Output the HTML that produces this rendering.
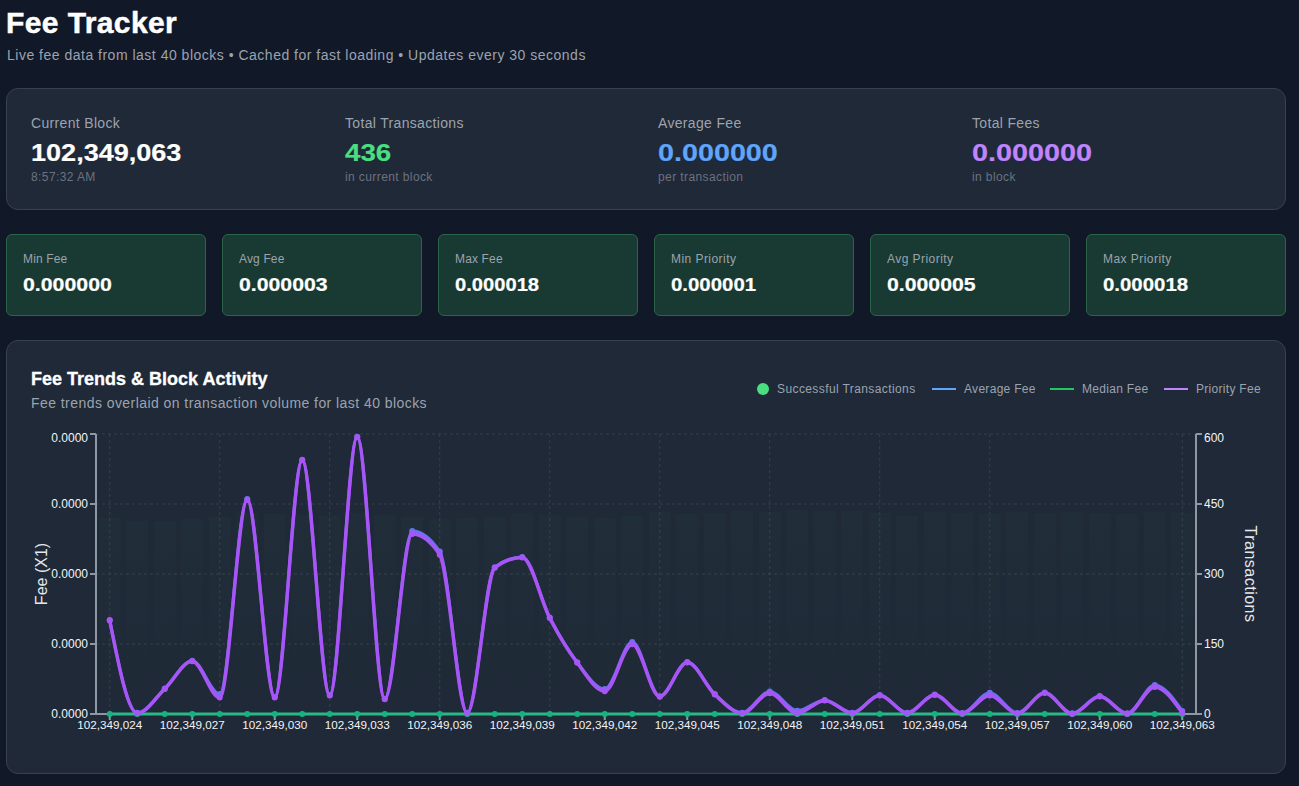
<!DOCTYPE html>
<html><head><meta charset="utf-8">
<style>
*{box-sizing:border-box;margin:0;padding:0}
html,body{width:1299px;height:786px;overflow:hidden;background:#111827;font-family:"Liberation Sans",sans-serif;color:#fff}
.abs{position:absolute;white-space:nowrap}
h1{position:absolute;left:6px;top:3px;font-size:30px;font-weight:700;color:#fff;line-height:40px;letter-spacing:0.4px;-webkit-text-stroke:0.5px #fff}
.sub{left:7px;top:45px;font-size:14px;color:#9ca3af;line-height:20px;letter-spacing:0.5px}
.card{position:absolute;background:#1f2937;border:1px solid #374151;border-radius:12px}
.g{position:absolute;top:234px;width:200px;height:82px;background:#183a32;border:1px solid #2b6549;border-radius:6px}
.lbl{font-size:14px;color:#9ca3af;line-height:20px;letter-spacing:0.33px}
.big{font-size:24px;font-weight:700;line-height:32px;-webkit-text-stroke:0.2px currentColor;transform-origin:0 0}
.sm{font-size:12px;color:#6b7280;line-height:16px;letter-spacing:0.4px}
.gl{font-size:12px;color:#9ca3af;line-height:16px;letter-spacing:0.15px}
.leg{font-size:12px;line-height:16px;color:#9ca3af;letter-spacing:0.3px}
.gv{font-size:18px;font-weight:700;line-height:28px;color:#fff;-webkit-text-stroke:0.2px #fff;transform-origin:0 0}
</style></head><body>
<h1>Fee Tracker</h1>
<div class="abs sub">Live fee data from last 40 blocks • Cached for fast loading • Updates every 30 seconds</div>

<div class="card" style="left:6px;top:88px;width:1280px;height:122px"></div>
<div class="abs lbl" style="left:31px;top:113px">Current Block</div>
<div class="abs big" style="left:31px;top:137px;transform:scaleX(1.127)">102,349,063</div>
<div class="abs sm" style="left:31px;top:169px">8:57:32 AM</div>

<div class="abs lbl" style="left:345px;top:113px">Total Transactions</div>
<div class="abs big" style="left:345px;top:137px;color:#4ade80;transform:scaleX(1.155)">436</div>
<div class="abs sm" style="left:345px;top:169px">in current block</div>

<div class="abs lbl" style="left:658px;top:113px">Average Fee</div>
<div class="abs big" style="left:658px;top:137px;color:#60a5fa;transform:scaleX(1.197)">0.000000</div>
<div class="abs sm" style="left:658px;top:169px">per transaction</div>

<div class="abs lbl" style="left:972px;top:113px">Total Fees</div>
<div class="abs big" style="left:972px;top:137px;color:#c084fc;transform:scaleX(1.2)">0.000000</div>
<div class="abs sm" style="left:972px;top:169px">in block</div>

<div class="g" style="left:6px"></div>
<div class="g" style="left:222px"></div>
<div class="g" style="left:438px"></div>
<div class="g" style="left:654px"></div>
<div class="g" style="left:870px"></div>
<div class="g" style="left:1086px"></div>
<div class="abs gl" style="left:23px;top:251px">Min Fee</div>
<div class="abs gv" style="left:23px;top:271px;transform:scaleX(1.183)">0.000000</div>
<div class="abs gl" style="left:239px;top:251px">Avg Fee</div>
<div class="abs gv" style="left:239px;top:271px;transform:scaleX(1.18)">0.000003</div>
<div class="abs gl" style="left:455px;top:251px">Max Fee</div>
<div class="abs gv" style="left:455px;top:271px;transform:scaleX(1.12)">0.000018</div>
<div class="abs gl" style="left:671px;top:251px;letter-spacing:0.45px">Min Priority</div>
<div class="abs gv" style="left:671px;top:271px;transform:scaleX(1.133)">0.000001</div>
<div class="abs gl" style="left:887px;top:251px;letter-spacing:0.45px">Avg Priority</div>
<div class="abs gv" style="left:887px;top:271px;transform:scaleX(1.18)">0.000005</div>
<div class="abs gl" style="left:1103px;top:251px;letter-spacing:0.45px">Max Priority</div>
<div class="abs gv" style="left:1103px;top:271px;transform:scaleX(1.133)">0.000018</div>

<div class="card" style="left:6px;top:340px;width:1280px;height:434px"></div>
<div class="abs" style="left:31px;top:365px;font-size:18px;font-weight:700;line-height:28px;color:#fff;letter-spacing:0px;-webkit-text-stroke:0.3px #fff">Fee Trends &amp; Block Activity</div>
<div class="abs" style="left:31px;top:393px;font-size:14px;line-height:20px;color:#9ca3af;letter-spacing:0.44px">Fee trends overlaid on transaction volume for last 40 blocks</div>
<div class="abs" style="left:757px;top:383px;width:12px;height:12px;border-radius:6px;background:#4ade80"></div>
<div class="abs leg" style="left:777px;top:381px;letter-spacing:0.4px">Successful Transactions</div>
<div class="abs" style="left:932px;top:388px;width:24px;height:2px;background:#60a5fa"></div>
<div class="abs leg" style="left:964px;top:381px">Average Fee</div>
<div class="abs" style="left:1050px;top:388px;width:24px;height:2px;background:#22c55e"></div>
<div class="abs leg" style="left:1082px;top:381px">Median Fee</div>
<div class="abs" style="left:1164px;top:388px;width:24px;height:2px;background:#c084fc"></div>
<div class="abs leg" style="left:1196px;top:381px">Priority Fee</div>
<!--CHART-->
<svg style="position:absolute;left:0;top:0" width="1299" height="786">
<defs><linearGradient id="bg" x1="0" y1="0" x2="0" y2="1"><stop offset="0" stop-color="#4ade80" stop-opacity="0.028"/><stop offset="1" stop-color="#4ade80" stop-opacity="0.0"/></linearGradient></defs>
<rect x="98.75" y="518" width="22" height="196.0" fill="url(#bg)"/>
<rect x="126.25" y="521" width="22" height="193.0" fill="url(#bg)"/>
<rect x="153.75" y="521" width="22" height="193.0" fill="url(#bg)"/>
<rect x="181.25" y="519" width="22" height="195.0" fill="url(#bg)"/>
<rect x="208.75" y="517" width="22" height="197.0" fill="url(#bg)"/>
<rect x="236.25" y="513" width="22" height="201.0" fill="url(#bg)"/>
<rect x="263.75" y="514" width="22" height="200.0" fill="url(#bg)"/>
<rect x="291.25" y="515" width="22" height="199.0" fill="url(#bg)"/>
<rect x="318.75" y="516" width="22" height="198.0" fill="url(#bg)"/>
<rect x="346.25" y="513" width="22" height="201.0" fill="url(#bg)"/>
<rect x="373.75" y="515" width="22" height="199.0" fill="url(#bg)"/>
<rect x="401.25" y="517" width="22" height="197.0" fill="url(#bg)"/>
<rect x="428.75" y="519" width="22" height="195.0" fill="url(#bg)"/>
<rect x="456.25" y="518" width="22" height="196.0" fill="url(#bg)"/>
<rect x="483.75" y="517" width="22" height="197.0" fill="url(#bg)"/>
<rect x="511.25" y="513" width="22" height="201.0" fill="url(#bg)"/>
<rect x="538.75" y="515" width="22" height="199.0" fill="url(#bg)"/>
<rect x="566.25" y="517" width="22" height="197.0" fill="url(#bg)"/>
<rect x="593.75" y="518" width="22" height="196.0" fill="url(#bg)"/>
<rect x="621.25" y="516" width="22" height="198.0" fill="url(#bg)"/>
<rect x="648.75" y="512" width="22" height="202.0" fill="url(#bg)"/>
<rect x="676.25" y="514" width="22" height="200.0" fill="url(#bg)"/>
<rect x="703.75" y="513" width="22" height="201.0" fill="url(#bg)"/>
<rect x="731.25" y="511" width="22" height="203.0" fill="url(#bg)"/>
<rect x="758.75" y="512" width="22" height="202.0" fill="url(#bg)"/>
<rect x="786.25" y="510" width="22" height="204.0" fill="url(#bg)"/>
<rect x="813.75" y="511" width="22" height="203.0" fill="url(#bg)"/>
<rect x="841.25" y="511" width="22" height="203.0" fill="url(#bg)"/>
<rect x="868.75" y="513" width="22" height="201.0" fill="url(#bg)"/>
<rect x="896.25" y="516" width="22" height="198.0" fill="url(#bg)"/>
<rect x="923.75" y="512" width="22" height="202.0" fill="url(#bg)"/>
<rect x="951.25" y="513" width="22" height="201.0" fill="url(#bg)"/>
<rect x="978.75" y="514" width="22" height="200.0" fill="url(#bg)"/>
<rect x="1006.25" y="512" width="22" height="202.0" fill="url(#bg)"/>
<rect x="1033.75" y="513" width="22" height="201.0" fill="url(#bg)"/>
<rect x="1061.25" y="512" width="22" height="202.0" fill="url(#bg)"/>
<rect x="1088.75" y="513" width="22" height="201.0" fill="url(#bg)"/>
<rect x="1116.25" y="514" width="22" height="200.0" fill="url(#bg)"/>
<rect x="1143.75" y="512" width="22" height="202.0" fill="url(#bg)"/>
<rect x="1171.25" y="513" width="22" height="201.0" fill="url(#bg)"/>
<line x1="96" y1="434" x2="1196" y2="434" stroke="#4b5563" stroke-opacity="0.5" stroke-dasharray="3 3" stroke-width="1"/>
<line x1="96" y1="504" x2="1196" y2="504" stroke="#4b5563" stroke-opacity="0.5" stroke-dasharray="3 3" stroke-width="1"/>
<line x1="96" y1="574" x2="1196" y2="574" stroke="#4b5563" stroke-opacity="0.5" stroke-dasharray="3 3" stroke-width="1"/>
<line x1="96" y1="644" x2="1196" y2="644" stroke="#4b5563" stroke-opacity="0.5" stroke-dasharray="3 3" stroke-width="1"/>
<line x1="96" y1="714" x2="1196" y2="714" stroke="#4b5563" stroke-opacity="0.5" stroke-dasharray="3 3" stroke-width="1"/>
<line x1="109.75" y1="434" x2="109.75" y2="714" stroke="#4b5563" stroke-opacity="0.5" stroke-dasharray="3 3" stroke-width="1"/>
<line x1="219.75" y1="434" x2="219.75" y2="714" stroke="#4b5563" stroke-opacity="0.5" stroke-dasharray="3 3" stroke-width="1"/>
<line x1="329.75" y1="434" x2="329.75" y2="714" stroke="#4b5563" stroke-opacity="0.5" stroke-dasharray="3 3" stroke-width="1"/>
<line x1="439.75" y1="434" x2="439.75" y2="714" stroke="#4b5563" stroke-opacity="0.5" stroke-dasharray="3 3" stroke-width="1"/>
<line x1="549.75" y1="434" x2="549.75" y2="714" stroke="#4b5563" stroke-opacity="0.5" stroke-dasharray="3 3" stroke-width="1"/>
<line x1="659.75" y1="434" x2="659.75" y2="714" stroke="#4b5563" stroke-opacity="0.5" stroke-dasharray="3 3" stroke-width="1"/>
<line x1="769.75" y1="434" x2="769.75" y2="714" stroke="#4b5563" stroke-opacity="0.5" stroke-dasharray="3 3" stroke-width="1"/>
<line x1="879.75" y1="434" x2="879.75" y2="714" stroke="#4b5563" stroke-opacity="0.5" stroke-dasharray="3 3" stroke-width="1"/>
<line x1="989.75" y1="434" x2="989.75" y2="714" stroke="#4b5563" stroke-opacity="0.5" stroke-dasharray="3 3" stroke-width="1"/>
<line x1="1182.25" y1="434" x2="1182.25" y2="714" stroke="#4b5563" stroke-opacity="0.5" stroke-dasharray="3 3" stroke-width="1"/>
<line x1="96" y1="434" x2="96" y2="714" stroke="#8f97a4" stroke-width="2"/>
<line x1="1196" y1="434" x2="1196" y2="714" stroke="#8f97a4" stroke-width="2"/>
<line x1="96" y1="714" x2="1196" y2="714" stroke="#8f97a4" stroke-width="2"/>
<line x1="90" y1="434" x2="96" y2="434" stroke="#8f97a4" stroke-width="2"/>
<line x1="1196" y1="434" x2="1202" y2="434" stroke="#8f97a4" stroke-width="2"/>
<line x1="90" y1="504" x2="96" y2="504" stroke="#8f97a4" stroke-width="2"/>
<line x1="1196" y1="504" x2="1202" y2="504" stroke="#8f97a4" stroke-width="2"/>
<line x1="90" y1="574" x2="96" y2="574" stroke="#8f97a4" stroke-width="2"/>
<line x1="1196" y1="574" x2="1202" y2="574" stroke="#8f97a4" stroke-width="2"/>
<line x1="90" y1="644" x2="96" y2="644" stroke="#8f97a4" stroke-width="2"/>
<line x1="1196" y1="644" x2="1202" y2="644" stroke="#8f97a4" stroke-width="2"/>
<line x1="90" y1="714" x2="96" y2="714" stroke="#8f97a4" stroke-width="2"/>
<line x1="1196" y1="714" x2="1202" y2="714" stroke="#8f97a4" stroke-width="2"/>
<line x1="109.75" y1="714" x2="109.75" y2="720" stroke="#8f97a4" stroke-width="2"/>
<line x1="192.25" y1="714" x2="192.25" y2="720" stroke="#8f97a4" stroke-width="2"/>
<line x1="274.75" y1="714" x2="274.75" y2="720" stroke="#8f97a4" stroke-width="2"/>
<line x1="357.25" y1="714" x2="357.25" y2="720" stroke="#8f97a4" stroke-width="2"/>
<line x1="439.75" y1="714" x2="439.75" y2="720" stroke="#8f97a4" stroke-width="2"/>
<line x1="522.25" y1="714" x2="522.25" y2="720" stroke="#8f97a4" stroke-width="2"/>
<line x1="604.75" y1="714" x2="604.75" y2="720" stroke="#8f97a4" stroke-width="2"/>
<line x1="687.25" y1="714" x2="687.25" y2="720" stroke="#8f97a4" stroke-width="2"/>
<line x1="769.75" y1="714" x2="769.75" y2="720" stroke="#8f97a4" stroke-width="2"/>
<line x1="852.25" y1="714" x2="852.25" y2="720" stroke="#8f97a4" stroke-width="2"/>
<line x1="934.75" y1="714" x2="934.75" y2="720" stroke="#8f97a4" stroke-width="2"/>
<line x1="1017.25" y1="714" x2="1017.25" y2="720" stroke="#8f97a4" stroke-width="2"/>
<line x1="1099.75" y1="714" x2="1099.75" y2="720" stroke="#8f97a4" stroke-width="2"/>
<line x1="1182.25" y1="714" x2="1182.25" y2="720" stroke="#8f97a4" stroke-width="2"/>
<text x="88" y="438" dy="0.355em" text-anchor="end" font-family="Liberation Sans, sans-serif" font-size="12" fill="#f3f4f6">0.0000</text>
<text x="88" y="504" dy="0.355em" text-anchor="end" font-family="Liberation Sans, sans-serif" font-size="12" fill="#f3f4f6">0.0000</text>
<text x="88" y="574" dy="0.355em" text-anchor="end" font-family="Liberation Sans, sans-serif" font-size="12" fill="#f3f4f6">0.0000</text>
<text x="88" y="644" dy="0.355em" text-anchor="end" font-family="Liberation Sans, sans-serif" font-size="12" fill="#f3f4f6">0.0000</text>
<text x="88" y="714" dy="0.355em" text-anchor="end" font-family="Liberation Sans, sans-serif" font-size="12" fill="#f3f4f6">0.0000</text>
<text x="1204" y="438" dy="0.355em" text-anchor="start" font-family="Liberation Sans, sans-serif" font-size="12" fill="#f3f4f6">600</text>
<text x="1204" y="504" dy="0.355em" text-anchor="start" font-family="Liberation Sans, sans-serif" font-size="12" fill="#f3f4f6">450</text>
<text x="1204" y="574" dy="0.355em" text-anchor="start" font-family="Liberation Sans, sans-serif" font-size="12" fill="#f3f4f6">300</text>
<text x="1204" y="644" dy="0.355em" text-anchor="start" font-family="Liberation Sans, sans-serif" font-size="12" fill="#f3f4f6">150</text>
<text x="1204" y="714" dy="0.355em" text-anchor="start" font-family="Liberation Sans, sans-serif" font-size="12" fill="#f3f4f6">0</text>
<text x="109.75" y="721" dy="0.71em" text-anchor="middle" font-family="Liberation Sans, sans-serif" font-size="11.7" fill="#f3f4f6">102,349,024</text>
<text x="192.25" y="721" dy="0.71em" text-anchor="middle" font-family="Liberation Sans, sans-serif" font-size="11.7" fill="#f3f4f6">102,349,027</text>
<text x="274.75" y="721" dy="0.71em" text-anchor="middle" font-family="Liberation Sans, sans-serif" font-size="11.7" fill="#f3f4f6">102,349,030</text>
<text x="357.25" y="721" dy="0.71em" text-anchor="middle" font-family="Liberation Sans, sans-serif" font-size="11.7" fill="#f3f4f6">102,349,033</text>
<text x="439.75" y="721" dy="0.71em" text-anchor="middle" font-family="Liberation Sans, sans-serif" font-size="11.7" fill="#f3f4f6">102,349,036</text>
<text x="522.25" y="721" dy="0.71em" text-anchor="middle" font-family="Liberation Sans, sans-serif" font-size="11.7" fill="#f3f4f6">102,349,039</text>
<text x="604.75" y="721" dy="0.71em" text-anchor="middle" font-family="Liberation Sans, sans-serif" font-size="11.7" fill="#f3f4f6">102,349,042</text>
<text x="687.25" y="721" dy="0.71em" text-anchor="middle" font-family="Liberation Sans, sans-serif" font-size="11.7" fill="#f3f4f6">102,349,045</text>
<text x="769.75" y="721" dy="0.71em" text-anchor="middle" font-family="Liberation Sans, sans-serif" font-size="11.7" fill="#f3f4f6">102,349,048</text>
<text x="852.25" y="721" dy="0.71em" text-anchor="middle" font-family="Liberation Sans, sans-serif" font-size="11.7" fill="#f3f4f6">102,349,051</text>
<text x="934.75" y="721" dy="0.71em" text-anchor="middle" font-family="Liberation Sans, sans-serif" font-size="11.7" fill="#f3f4f6">102,349,054</text>
<text x="1017.25" y="721" dy="0.71em" text-anchor="middle" font-family="Liberation Sans, sans-serif" font-size="11.7" fill="#f3f4f6">102,349,057</text>
<text x="1099.75" y="721" dy="0.71em" text-anchor="middle" font-family="Liberation Sans, sans-serif" font-size="11.7" fill="#f3f4f6">102,349,060</text>
<text x="1182.25" y="721" dy="0.71em" text-anchor="middle" font-family="Liberation Sans, sans-serif" font-size="11.7" fill="#f3f4f6">102,349,063</text>
<text transform="translate(46.5,574) rotate(-90)" text-anchor="middle" font-family="Liberation Sans, sans-serif" font-size="16" fill="#e5e7eb">Fee (X1)</text>
<text transform="translate(1245,574) rotate(90)" text-anchor="middle" letter-spacing="0.5" font-family="Liberation Sans, sans-serif" font-size="16" fill="#e5e7eb">Transactions</text>
<path d="M109.75,714.00C118.92,714.00,128.08,714.00,137.25,714.00C146.42,714.00,155.58,714.00,164.75,714.00C173.92,714.00,183.08,714.00,192.25,714.00C201.42,714.00,210.58,714.00,219.75,714.00C228.92,714.00,238.08,714.00,247.25,714.00C256.42,714.00,265.58,714.00,274.75,714.00C283.92,714.00,293.08,714.00,302.25,714.00C311.42,714.00,320.58,714.00,329.75,714.00C338.92,714.00,348.08,714.00,357.25,714.00C366.42,714.00,375.58,714.00,384.75,714.00C393.92,714.00,403.08,714.00,412.25,714.00C421.42,714.00,430.58,714.00,439.75,714.00C448.92,714.00,458.08,714.00,467.25,714.00C476.42,714.00,485.58,714.00,494.75,714.00C503.92,714.00,513.08,714.00,522.25,714.00C531.42,714.00,540.58,714.00,549.75,714.00C558.92,714.00,568.08,714.00,577.25,714.00C586.42,714.00,595.58,714.00,604.75,714.00C613.92,714.00,623.08,714.00,632.25,714.00C641.42,714.00,650.58,714.00,659.75,714.00C668.92,714.00,678.08,714.00,687.25,714.00C696.42,714.00,705.58,714.00,714.75,714.00C723.92,714.00,733.08,714.00,742.25,714.00C751.42,714.00,760.58,714.00,769.75,714.00C778.92,714.00,788.08,714.00,797.25,714.00C806.42,714.00,815.58,714.00,824.75,714.00C833.92,714.00,843.08,714.00,852.25,714.00C861.42,714.00,870.58,714.00,879.75,714.00C888.92,714.00,898.08,714.00,907.25,714.00C916.42,714.00,925.58,714.00,934.75,714.00C943.92,714.00,953.08,714.00,962.25,714.00C971.42,714.00,980.58,714.00,989.75,714.00C998.92,714.00,1008.08,714.00,1017.25,714.00C1026.42,714.00,1035.58,714.00,1044.75,714.00C1053.92,714.00,1063.08,714.00,1072.25,714.00C1081.42,714.00,1090.58,714.00,1099.75,714.00C1108.92,714.00,1118.08,714.00,1127.25,714.00C1136.42,714.00,1145.58,714.00,1154.75,714.00C1163.92,714.00,1173.08,714.00,1182.25,714.00" fill="none" stroke="#2bb886" stroke-width="3"/><circle cx="109.75" cy="714.00" r="3" fill="#14b47f"/><circle cx="137.25" cy="714.00" r="3" fill="#14b47f"/><circle cx="164.75" cy="714.00" r="3" fill="#14b47f"/><circle cx="192.25" cy="714.00" r="3" fill="#14b47f"/><circle cx="219.75" cy="714.00" r="3" fill="#14b47f"/><circle cx="247.25" cy="714.00" r="3" fill="#14b47f"/><circle cx="274.75" cy="714.00" r="3" fill="#14b47f"/><circle cx="302.25" cy="714.00" r="3" fill="#14b47f"/><circle cx="329.75" cy="714.00" r="3" fill="#14b47f"/><circle cx="357.25" cy="714.00" r="3" fill="#14b47f"/><circle cx="384.75" cy="714.00" r="3" fill="#14b47f"/><circle cx="412.25" cy="714.00" r="3" fill="#14b47f"/><circle cx="439.75" cy="714.00" r="3" fill="#14b47f"/><circle cx="467.25" cy="714.00" r="3" fill="#14b47f"/><circle cx="494.75" cy="714.00" r="3" fill="#14b47f"/><circle cx="522.25" cy="714.00" r="3" fill="#14b47f"/><circle cx="549.75" cy="714.00" r="3" fill="#14b47f"/><circle cx="577.25" cy="714.00" r="3" fill="#14b47f"/><circle cx="604.75" cy="714.00" r="3" fill="#14b47f"/><circle cx="632.25" cy="714.00" r="3" fill="#14b47f"/><circle cx="659.75" cy="714.00" r="3" fill="#14b47f"/><circle cx="687.25" cy="714.00" r="3" fill="#14b47f"/><circle cx="714.75" cy="714.00" r="3" fill="#14b47f"/><circle cx="742.25" cy="714.00" r="3" fill="#14b47f"/><circle cx="769.75" cy="714.00" r="3" fill="#14b47f"/><circle cx="797.25" cy="714.00" r="3" fill="#14b47f"/><circle cx="824.75" cy="714.00" r="3" fill="#14b47f"/><circle cx="852.25" cy="714.00" r="3" fill="#14b47f"/><circle cx="879.75" cy="714.00" r="3" fill="#14b47f"/><circle cx="907.25" cy="714.00" r="3" fill="#14b47f"/><circle cx="934.75" cy="714.00" r="3" fill="#14b47f"/><circle cx="962.25" cy="714.00" r="3" fill="#14b47f"/><circle cx="989.75" cy="714.00" r="3" fill="#14b47f"/><circle cx="1017.25" cy="714.00" r="3" fill="#14b47f"/><circle cx="1044.75" cy="714.00" r="3" fill="#14b47f"/><circle cx="1072.25" cy="714.00" r="3" fill="#14b47f"/><circle cx="1099.75" cy="714.00" r="3" fill="#14b47f"/><circle cx="1127.25" cy="714.00" r="3" fill="#14b47f"/><circle cx="1154.75" cy="714.00" r="3" fill="#14b47f"/><circle cx="1182.25" cy="714.00" r="3" fill="#14b47f"/>
<path d="M109.75,620.10C118.92,666.45,128.08,712.80,137.25,712.80C146.42,712.80,155.58,697.18,164.75,688.50C173.92,679.82,183.08,660.70,192.25,660.70C201.42,660.70,210.58,694.00,219.75,694.00C228.92,694.00,238.08,499.00,247.25,499.00C256.42,499.00,265.58,697.00,274.75,697.00C283.92,697.00,293.08,459.70,302.25,459.70C311.42,459.70,320.58,695.10,329.75,695.10C338.92,695.10,348.08,436.80,357.25,436.80C366.42,436.80,375.58,698.80,384.75,698.80C393.92,698.80,403.08,530.90,412.25,530.90C421.42,530.90,430.58,537.77,439.75,551.50C448.92,565.23,458.08,712.80,467.25,712.80C476.42,712.80,485.58,574.07,494.75,567.20C503.92,560.33,513.08,556.90,522.25,556.90C531.42,556.90,540.58,600.03,549.75,617.60C558.92,635.17,568.08,650.40,577.25,662.30C586.42,674.20,595.58,689.00,604.75,689.00C613.92,689.00,623.08,642.00,632.25,642.00C641.42,642.00,650.58,696.20,659.75,696.20C668.92,696.20,678.08,662.00,687.25,662.00C696.42,662.00,705.58,685.55,714.75,694.00C723.92,702.45,733.08,712.70,742.25,712.70C751.42,712.70,760.58,691.50,769.75,691.50C778.92,691.50,788.08,710.70,797.25,710.70C806.42,710.70,815.58,699.90,824.75,699.90C833.92,699.90,843.08,712.70,852.25,712.70C861.42,712.70,870.58,694.90,879.75,694.90C888.92,694.90,898.08,712.70,907.25,712.70C916.42,712.70,925.58,694.50,934.75,694.50C943.92,694.50,953.08,713.00,962.25,713.00C971.42,713.00,980.58,692.70,989.75,692.70C998.92,692.70,1008.08,713.00,1017.25,713.00C1026.42,713.00,1035.58,692.60,1044.75,692.60C1053.92,692.60,1063.08,713.30,1072.25,713.30C1081.42,713.30,1090.58,696.10,1099.75,696.10C1108.92,696.10,1118.08,713.30,1127.25,713.30C1136.42,713.30,1145.58,685.00,1154.75,685.00C1163.92,685.00,1173.08,698.00,1182.25,711.00" fill="none" stroke="#6a72f0" stroke-width="3"/><circle cx="109.75" cy="620.10" r="3" fill="#6a72f0"/><circle cx="137.25" cy="712.80" r="3" fill="#6a72f0"/><circle cx="164.75" cy="688.50" r="3" fill="#6a72f0"/><circle cx="192.25" cy="660.70" r="3" fill="#6a72f0"/><circle cx="219.75" cy="694.00" r="3" fill="#6a72f0"/><circle cx="247.25" cy="499.00" r="3" fill="#6a72f0"/><circle cx="274.75" cy="697.00" r="3" fill="#6a72f0"/><circle cx="302.25" cy="459.70" r="3" fill="#6a72f0"/><circle cx="329.75" cy="695.10" r="3" fill="#6a72f0"/><circle cx="357.25" cy="436.80" r="3" fill="#6a72f0"/><circle cx="384.75" cy="698.80" r="3" fill="#6a72f0"/><circle cx="412.25" cy="530.90" r="3" fill="#6a72f0"/><circle cx="439.75" cy="551.50" r="3" fill="#6a72f0"/><circle cx="467.25" cy="712.80" r="3" fill="#6a72f0"/><circle cx="494.75" cy="567.20" r="3" fill="#6a72f0"/><circle cx="522.25" cy="556.90" r="3" fill="#6a72f0"/><circle cx="549.75" cy="617.60" r="3" fill="#6a72f0"/><circle cx="577.25" cy="662.30" r="3" fill="#6a72f0"/><circle cx="604.75" cy="689.00" r="3" fill="#6a72f0"/><circle cx="632.25" cy="642.00" r="3" fill="#6a72f0"/><circle cx="659.75" cy="696.20" r="3" fill="#6a72f0"/><circle cx="687.25" cy="662.00" r="3" fill="#6a72f0"/><circle cx="714.75" cy="694.00" r="3" fill="#6a72f0"/><circle cx="742.25" cy="712.70" r="3" fill="#6a72f0"/><circle cx="769.75" cy="691.50" r="3" fill="#6a72f0"/><circle cx="797.25" cy="710.70" r="3" fill="#6a72f0"/><circle cx="824.75" cy="699.90" r="3" fill="#6a72f0"/><circle cx="852.25" cy="712.70" r="3" fill="#6a72f0"/><circle cx="879.75" cy="694.90" r="3" fill="#6a72f0"/><circle cx="907.25" cy="712.70" r="3" fill="#6a72f0"/><circle cx="934.75" cy="694.50" r="3" fill="#6a72f0"/><circle cx="962.25" cy="713.00" r="3" fill="#6a72f0"/><circle cx="989.75" cy="692.70" r="3" fill="#6a72f0"/><circle cx="1017.25" cy="713.00" r="3" fill="#6a72f0"/><circle cx="1044.75" cy="692.60" r="3" fill="#6a72f0"/><circle cx="1072.25" cy="713.30" r="3" fill="#6a72f0"/><circle cx="1099.75" cy="696.10" r="3" fill="#6a72f0"/><circle cx="1127.25" cy="713.30" r="3" fill="#6a72f0"/><circle cx="1154.75" cy="685.00" r="3" fill="#6a72f0"/><circle cx="1182.25" cy="711.00" r="3" fill="#6a72f0"/>
<path d="M109.75,620.60C118.92,666.95,128.08,713.30,137.25,713.30C146.42,713.30,155.58,697.68,164.75,689.00C173.92,680.32,183.08,661.20,192.25,661.20C201.42,661.20,210.58,697.60,219.75,697.60C228.92,697.60,238.08,500.00,247.25,500.00C256.42,500.00,265.58,697.50,274.75,697.50C283.92,697.50,293.08,460.20,302.25,460.20C311.42,460.20,320.58,695.60,329.75,695.60C338.92,695.60,348.08,437.30,357.25,437.30C366.42,437.30,375.58,699.30,384.75,699.30C393.92,699.30,403.08,534.10,412.25,534.10C421.42,534.10,430.58,540.97,439.75,554.70C448.92,568.43,458.08,713.30,467.25,713.30C476.42,713.30,485.58,574.57,494.75,567.70C503.92,560.83,513.08,557.40,522.25,557.40C531.42,557.40,540.58,600.53,549.75,618.10C558.92,635.67,568.08,650.62,577.25,662.80C586.42,674.98,595.58,691.20,604.75,691.20C613.92,691.20,623.08,644.30,632.25,644.30C641.42,644.30,650.58,696.70,659.75,696.70C668.92,696.70,678.08,662.50,687.25,662.50C696.42,662.50,705.58,686.05,714.75,694.50C723.92,702.95,733.08,713.20,742.25,713.20C751.42,713.20,760.58,693.30,769.75,693.30C778.92,693.30,788.08,713.20,797.25,713.20C806.42,713.20,815.58,700.40,824.75,700.40C833.92,700.40,843.08,713.20,852.25,713.20C861.42,713.20,870.58,695.40,879.75,695.40C888.92,695.40,898.08,713.20,907.25,713.20C916.42,713.20,925.58,695.00,934.75,695.00C943.92,695.00,953.08,713.50,962.25,713.50C971.42,713.50,980.58,695.60,989.75,695.60C998.92,695.60,1008.08,713.50,1017.25,713.50C1026.42,713.50,1035.58,693.10,1044.75,693.10C1053.92,693.10,1063.08,713.80,1072.25,713.80C1081.42,713.80,1090.58,696.60,1099.75,696.60C1108.92,696.60,1118.08,713.80,1127.25,713.80C1136.42,713.80,1145.58,686.90,1154.75,686.90C1163.92,686.90,1173.08,699.90,1182.25,712.90" fill="none" stroke="#a855f7" stroke-width="3.5"/><circle cx="109.75" cy="620.60" r="3" fill="#a855f7"/><circle cx="137.25" cy="713.30" r="3" fill="#a855f7"/><circle cx="164.75" cy="689.00" r="3" fill="#a855f7"/><circle cx="192.25" cy="661.20" r="3" fill="#a855f7"/><circle cx="219.75" cy="697.60" r="3" fill="#a855f7"/><circle cx="247.25" cy="500.00" r="3" fill="#a855f7"/><circle cx="274.75" cy="697.50" r="3" fill="#a855f7"/><circle cx="302.25" cy="460.20" r="3" fill="#a855f7"/><circle cx="329.75" cy="695.60" r="3" fill="#a855f7"/><circle cx="357.25" cy="437.30" r="3" fill="#a855f7"/><circle cx="384.75" cy="699.30" r="3" fill="#a855f7"/><circle cx="412.25" cy="534.10" r="3" fill="#a855f7"/><circle cx="439.75" cy="554.70" r="3" fill="#a855f7"/><circle cx="467.25" cy="713.30" r="3" fill="#a855f7"/><circle cx="494.75" cy="567.70" r="3" fill="#a855f7"/><circle cx="522.25" cy="557.40" r="3" fill="#a855f7"/><circle cx="549.75" cy="618.10" r="3" fill="#a855f7"/><circle cx="577.25" cy="662.80" r="3" fill="#a855f7"/><circle cx="604.75" cy="691.20" r="3" fill="#a855f7"/><circle cx="632.25" cy="644.30" r="3" fill="#a855f7"/><circle cx="659.75" cy="696.70" r="3" fill="#a855f7"/><circle cx="687.25" cy="662.50" r="3" fill="#a855f7"/><circle cx="714.75" cy="694.50" r="3" fill="#a855f7"/><circle cx="742.25" cy="713.20" r="3" fill="#a855f7"/><circle cx="769.75" cy="693.30" r="3" fill="#a855f7"/><circle cx="797.25" cy="713.20" r="3" fill="#a855f7"/><circle cx="824.75" cy="700.40" r="3" fill="#a855f7"/><circle cx="852.25" cy="713.20" r="3" fill="#a855f7"/><circle cx="879.75" cy="695.40" r="3" fill="#a855f7"/><circle cx="907.25" cy="713.20" r="3" fill="#a855f7"/><circle cx="934.75" cy="695.00" r="3" fill="#a855f7"/><circle cx="962.25" cy="713.50" r="3" fill="#a855f7"/><circle cx="989.75" cy="695.60" r="3" fill="#a855f7"/><circle cx="1017.25" cy="713.50" r="3" fill="#a855f7"/><circle cx="1044.75" cy="693.10" r="3" fill="#a855f7"/><circle cx="1072.25" cy="713.80" r="3" fill="#a855f7"/><circle cx="1099.75" cy="696.60" r="3" fill="#a855f7"/><circle cx="1127.25" cy="713.80" r="3" fill="#a855f7"/><circle cx="1154.75" cy="686.90" r="3" fill="#a855f7"/><circle cx="1182.25" cy="712.90" r="3" fill="#a855f7"/>
</svg>
<!--/CHART--><!--/CHART--><!--/CHART--><!--/CHART--><!--/CHART--><!--/CHART--><!--/CHART--><!--/CHART--><!--/CHART--><!--/CHART--><!--/CHART--><!--/CHART--><!--/CHART--><!--/CHART-->
</body></html>
